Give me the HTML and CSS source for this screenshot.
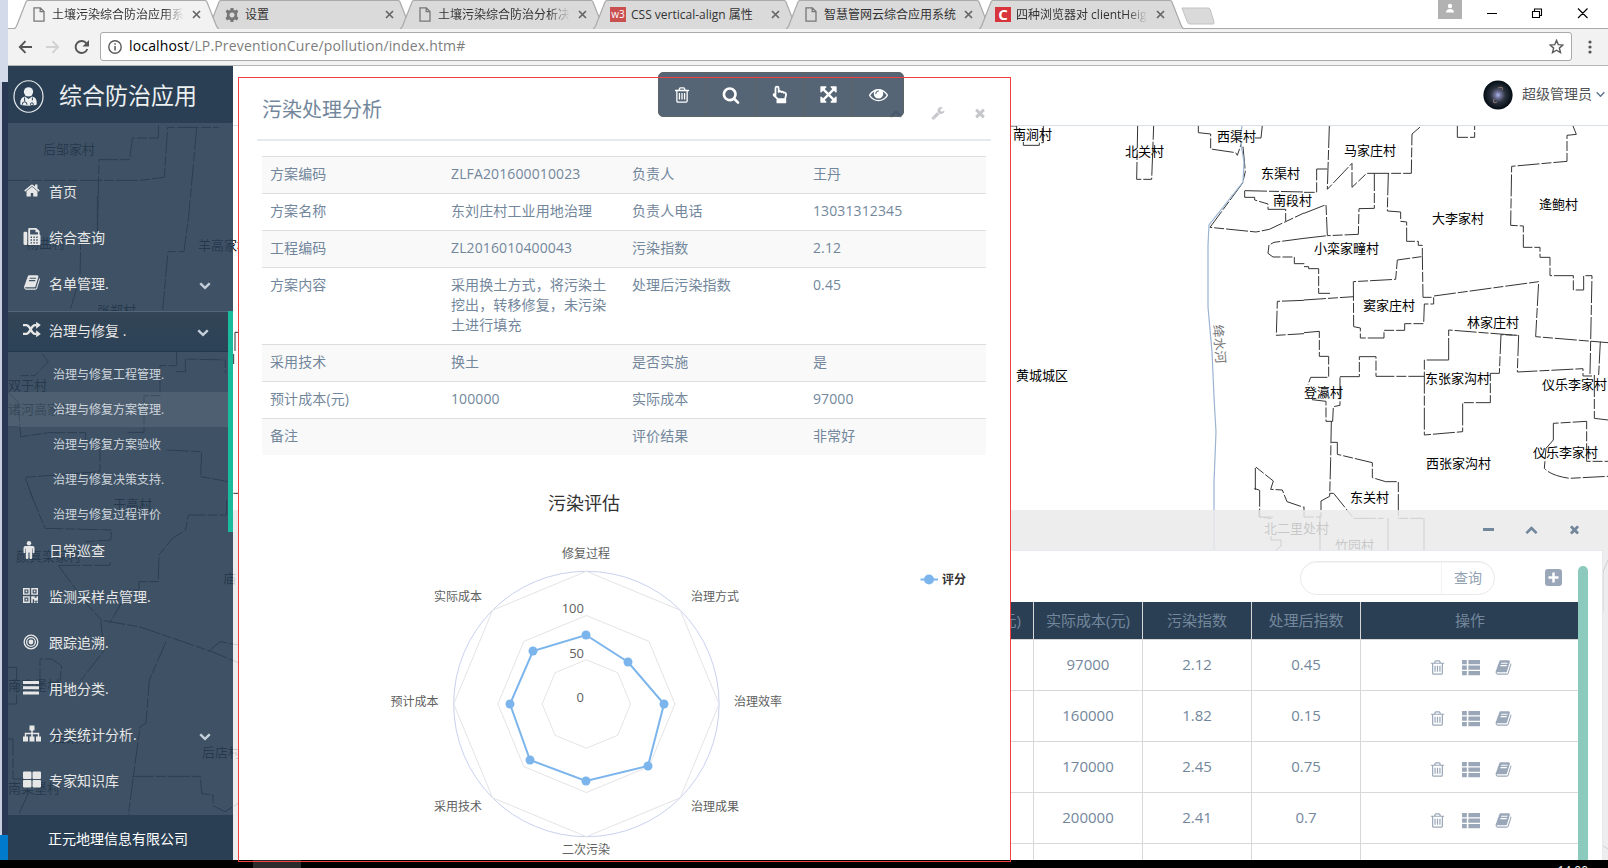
FILE: index.html
```html
<!DOCTYPE html>
<html lang="zh-CN">
<head>
<meta charset="utf-8">
<title>土壤污染综合防治应用系统</title>
<link rel="stylesheet" href="styles.css">
</head>
<body>
<svg class="defs" aria-hidden="true">
  <symbol id="home" viewBox="0 0 1792 1792"><path d="M1472 992v480q0 26-19 45t-45 19h-384v-384h-256v384h-384q-26 0-45-19t-19-45v-480q0-1 .5-3t.5-3l575-474 575 474q1 2 1 6zm223-69l-62 74q-8 9-21 11h-3q-13 0-21-7l-692-577-692 577q-12 8-24 7-13-2-21-11l-62-74q-8-10-7-23.5t11-21.5l719-599q32-26 76-26t76 26l244 204v-195q0-14 9-23t23-9h192q14 0 23 9t9 23v408l219 182q10 8 11 21.5t-7 23.5z"/></symbol>
  <symbol id="search" viewBox="0 0 1792 1792"><path d="M1216 832q0-185-131.500-316.500t-316.500-131.500-316.500 131.500-131.500 316.500 131.500 316.500 316.500 131.500 316.500-131.500 131.500-316.500zm512 832q0 52-38 90t-90 38q-54 0-90-38l-343-342q-179 124-399 124-143 0-273.500-55.500t-225-150-150-225-55.500-273.500 55.500-273.500 150-225 225-150 273.500-55.500 273.500 55.500 225 150 150 225 55.500 273.500q0 220-124 399l343 343q37 37 37 90z"/></symbol>
  <symbol id="trash" viewBox="0 0 1792 1792"><path d="M704 736v576q0 14-9 23t-23 9h-64q-14 0-23-9t-9-23v-576q0-14 9-23t23-9h64q14 0 23 9t9 23zm256 0v576q0 14-9 23t-23 9h-64q-14 0-23-9t-9-23v-576q0-14 9-23t23-9h64q14 0 23 9t9 23zm256 0v576q0 14-9 23t-23 9h-64q-14 0-23-9t-9-23v-576q0-14 9-23t23-9h64q14 0 23 9t9 23zm128 724v-948h-896v948q0 22 7 40.500t14.500 27 10.500 8.500h832q3 0 10.500-8.500t14.500-27 7-40.500zm-672-1076h448l-48-117q-7-9-17-11h-317q-10 2-17 11zm928 32v64q0 14-9 23t-23 9h-96v948q0 83-47 143.500t-113 60.500h-832q-66 0-113-58.500t-47-141.500v-952h-96q-14 0-23-9t-9-23v-64q0-14 9-23t23-9h309l70-167q15-37 54-63t79-26h320q40 0 79 26t54 63l70 167h309q14 0 23 9t9 23z"/></symbol>
  <symbol id="times" viewBox="0 0 1792 1792"><path d="M1490 1322q0 40-28 68l-136 136q-28 28-68 28t-68-28l-294-294-294 294q-28 28-68 28t-68-28l-136-136q-28-28-28-68t28-68l294-294-294-294q-28-28-28-68t28-68l136-136q28-28 68-28t68 28l294 294 294-294q28-28 68-28t68 28l136 136q28 28 28 68t-28 68l-294 294 294 294q28 28 28 68z"/></symbol>
  <symbol id="down" viewBox="0 0 1792 1792"><path d="M1683 808l-742 741q-19 19-45 19t-45-19l-742-741q-19-19-19-45.500t19-45.500l166-165q19-19 45-19t45 19l531 531 531-531q19-19 45-19t45 19l166 165q19 19 19 45.500t-19 45.500z"/></symbol>
  <symbol id="up" viewBox="0 0 1792 1792"><path d="M1683 1331l-166 165q-19 19-45 19t-45-19l-531-531-531 531q-19 19-45 19t-45-19l-166-165q-19-19-19-45.500t19-45.500l742-741q19-19 45-19t45 19l742 741q19 19 19 45.500t-19 45.500z"/></symbol>
  <symbol id="book" viewBox="0 0 1792 1792"><path d="M1703 478q40 57 18 129l-275 906q-19 64-76.500 107.500t-122.500 43.500h-923q-77 0-148.500-53.500t-99.500-131.500q-24-67-2-127 0-4 3-27t4-37q1-8-3-21.500t-3-19.500q2-11 8-21t16.500-23.500 16.500-23.500q23-38 45-91.500t30-91.500q3-10 .5-30t-.5-28q3-11 17-28t17-23q21-36 42-92t25-90q1-9-2.500-32t.5-28q4-13 22-30.500t22-22.500q19-26 42.500-84.500t27.500-96.500q1-8-3-25.500t-2-26.500q2-8 9-18t18-23 17-21q8-12 16.500-30.500t15-35 16-36 19.500-32 26.500-23.500 36-11.500 47.500 5.500l-1 3q38-9 51-9h761q74 0 114 56t18 130l-274 906q-36 119-71.500 153.500t-128.500 34.500h-869q-27 0-38 15-11 16-1 43 24 70 144 70h923q29 0 56-15.500t35-41.500l300-987q7-22 5-57 38 15 59 43zm-1064 2q-4 13 2 22.500t20 9.500h608q13 0 25.500-9.500t16.500-22.500l21-64q4-13-2-22.500t-20-9.500h-608q-13 0-25.500 9.500t-16.500 22.500zm-83 256q-4 13 2 22.500t20 9.500h608q13 0 25.500-9.500t16.500-22.500l21-64q4-13-2-22.500t-20-9.500h-608q-13 0-25.500 9.500t-16.500 22.500z"/></symbol>
  <symbol id="wrench" viewBox="0 0 1792 1792"><path d="M448 1472q0-26-19-45t-45-19-45 19-19 45 19 45 45 19 45-19 19-45zm644-420l-682 682q-37 37-90 37-52 0-91-37l-106-108q-38-36-38-90 0-53 38-91l681-681q39 98 114.500 173.500t173.500 114.500zm634-435q0 39-23 106-47 134-164.500 217.500t-258.500 83.500q-185 0-316.500-131.500t-131.500-316.500 131.500-316.500 316.500-131.500q58 0 121.500 16.500t107.500 46.500q16 11 16 28t-16 28l-293 169v224l193 107q5-3 79-48.500t135.500-81 70.500-35.500q15 0 23.500 10t8.500 25z"/></symbol>
  <symbol id="eye" viewBox="0 0 1792 1792"><path d="M1664 960q-152-236-381-353 61 104 61 225 0 185-131.500 316.500t-316.500 131.500-316.500-131.500-131.500-316.500q0-121 61-225-229 117-381 353 133 205 333.500 326.500t434.500 121.500 434.500-121.500 333.500-326.500zm-720-384q0-20-14-34t-34-14q-125 0-214.500 89.500t-89.500 214.500q0 20 14 34t34 14 34-14 14-34q0-86 61-147t147-61q20 0 34-14t14-34zm848 384q0 34-20 69-140 230-376.500 368.500t-499.500 138.500-499.500-139-376.500-368q-20-35-20-69t20-69q140-229 376.500-368t499.500-139 499.500 139 376.500 368q20 35 20 69z"/></symbol>
  <symbol id="arrows" viewBox="0 0 1792 1792"><path d="M1411 541l-355 355 355 355 144-144q29-31 70-14 39 17 39 59v448q0 26-19 45t-45 19h-448q-42 0-59-40-17-39 14-69l144-144-355-355-355 355 144 144q31 30 14 69-17 40-59 40h-448q-26 0-45-19t-19-45v-448q0-42 40-59 39-17 69 14l144 144 355-355-355-355-144 144q-19 19-45 19-12 0-24-5-40-17-40-59v-448q0-26 19-45t45-19h448q42 0 59 40 17 39-14 69l-144 144 355 355 355-355-144-144q-31-30-14-69 17-40 59-40h448q26 0 45 19t19 45v448q0 42-39 59-13 5-25 5-26 0-45-19z"/></symbol>
  <symbol id="hand" viewBox="0 0 18 18"><path d="M5.200 9.700V3a1.500 1.500 0 0 1 3 0v3.600c.3-1 2.400-.9 2.600.2.500-.7 2.200-.5 2.300.6.800-.5 2.100 0 2.100 1.300 0 2-.8 3-.8 4.800H7.300c-.8-1.700-2.100-2-3.500-3.500-.9-1-.1-2.300 1.400-.3zM7 14v2.500h7.500V14" fill="none" stroke="currentColor" stroke-width="1.700" stroke-linejoin="round"/><path d="M7 13.500h7.500v3H7z"/></symbol>
  <symbol id="list" viewBox="0 0 18 16"><path d="M1 1h4.500v4H1zM7 1h11v4H7zM1 6.200h4.500v4H1zM7 6.200h11v4H7zM1 11.400h4.500v4H1zM7 11.400h11v4H7z"/></symbol>
  <symbol id="fax" viewBox="0 0 18 18"><path fill-rule="evenodd" d="M0 5.500q0-1.500 1.200-1.500H3q1 0 1 1.200V17q0 1-1 1H1.200Q0 18 0 16.800zM5 1q0-1 1-1h7.500L17 3.300V7q1 .3 1 1.300V17q0 1-1 1H5zM7 1.800V7h8.300V4.500h-2.600V1.800zM7.500 9v1.500H9V9zm3 0v1.500H12V9zm3 0v1.500H15V9zm-6 3v1.500H9V12zm3 0v1.500H12V12zm3 0v1.500H15V12zm-6 3v1.500H9V15zm3 0v1.500H12V15zm3 0v1.500H15V15z"/></symbol>
  <symbol id="random" viewBox="0 0 18.500 16"><path d="M0 3.500h3.200c4.800 0 4.500 9 9.300 9H14M0 12.500h3.200c4.800 0 4.500-9 9.300-9H14" fill="none" stroke="currentColor" stroke-width="2.500"/><path d="M13.500 0L18.300 3.500l-4.800 3.700zM13.500 8.800l4.800 3.700-4.800 3.500z"/></symbol>
  <symbol id="male" viewBox="0 0 12 18"><circle cx="6" cy="2.200" r="2.200"/><path d="M2.500 5h7q2 0 2 2v4.200q0 1-.9 1t-.9-1V7.500H9.200V17q0 1-1.300 1t-1.300-1v-5.500H5.400V17q0 1-1.300 1t-1.300-1V7.500h-.5v3.700q0 1-.9 1t-.9-1V7q0-2 2-2z"/></symbol>
  <symbol id="qr" viewBox="0 0 15 15"><path fill-rule="evenodd" d="M0 0h6.800v6.800H0zM1.400 1.400v4h4v-4zM2.600 2.600h1.600v1.600H2.600zM8.200 0H15v6.800H8.200zm1.400 1.400v4h4v-4zm1.200 1.200h1.600v1.600h-1.600zM0 8.200h6.800V15H0zm1.400 1.400v4h4v-4zm1.200 1.200h1.600v1.600H2.600zM8.200 8.200h3.500v1.500h1.800V8.200H15v4.500h-4v-1.400H9.700V15H8.200zM11 13.500h1.400V15H11zm2.600 0H15V15h-1.400z"/></symbol>
  <symbol id="target" viewBox="0 0 18 18"><g fill="none" stroke="currentColor" stroke-width="1.500"><circle cx="9" cy="9" r="7.700"/><circle cx="9" cy="9" r="4.900"/></g><circle cx="9" cy="9" r="2.700"/></symbol>
  <symbol id="bars" viewBox="0 0 16 14"><path d="M0 0h16v3H0zM0 5.200h16v3H0zM0 10.400h16v3H0z"/></symbol>
  <symbol id="sitemap" viewBox="0 0 18 16"><path d="M6.500 0h5v5H9.800v2.300h6.400V11H18v5h-5v-5h1.800V8.700h-5V11h1.700v5h-5v-5h1.700V8.700H3.200V11H5v5H0v-5h1.800V7.300h6.400V5H6.500z"/></symbol>
  <symbol id="large" viewBox="0 0 17 15"><path d="M1 0h6q1 0 1 1v5q0 1-1 1H1Q0 7 0 6V1q0-1 1-1zm9 0h6q1 0 1 1v5q0 1-1 1h-6Q9 7 9 6V1q0-1 1-1zM1 8h6q1 0 1 1v5q0 1-1 1H1q-1 0-1-1V9q0-1 1-1zm9 0h6q1 0 1 1v5q0 1-1 1h-6q-1 0-1-1V9q0-1 1-1z"/></symbol>
  <symbol id="page" viewBox="0 0 12 15"><path d="M1 .8h6.300L11 4.500v9.700H1zM7.200.8v3.800H11" fill="none" stroke="currentColor" stroke-width="1.300"/></symbol>
  <symbol id="gear" viewBox="0 0 14 14"><path fill-rule="evenodd" d="M5.600 0h2.800l.4 1.900 1.300.6L11.800 1.400l1.500 2.200-1.200 1.600v3.200l1.300 1.700-1.500 2.400-1.900-1-1.300.6-.4 1.900H5.600l-.4-1.900-1.300-.6-1.900 1L.5 10.100l1.400-1.700V5.200L.6 3.600l1.500-2.200 1.800 1.100 1.300-.6zM7 4.400a2.600 2.600 0 1 0 .01 0z"/></symbol>
  <symbol id="tabshape" viewBox="0 0 205 29" preserveAspectRatio="none"><path d="M0 29Q2 28 3 25L12 2q.8-1.500 2.500-1.500h176q1.700 0 2.500 1.500l9 23q1 3 3 4" stroke="#aaa" stroke-width="1.200"/></symbol>
  <symbol id="x" viewBox="0 0 9 9"><path d="M1 1l7 7M8 1L1 8" fill="none" stroke="currentColor" stroke-width="1.700"/></symbol>
</svg>

<div class="screen">
  <div class="edge"><i class="edge-top"></i><i class="edge-mid"></i><i class="edge-end"></i></div>
  <div class="window">
    <div class="tabstrip">
      <div class="tab active"><svg class="shape"><use href="#tabshape"/></svg><svg class="fav page"><use href="#page"/></svg><span class="fade">土壤污染综合防治应用系</span><svg class="close"><use href="#x"/></svg></div>
      <div class="tab"><svg class="shape"><use href="#tabshape"/></svg><svg class="fav gear"><use href="#gear"/></svg><span>设置</span><svg class="close"><use href="#x"/></svg></div>
      <div class="tab"><svg class="shape"><use href="#tabshape"/></svg><svg class="fav page"><use href="#page"/></svg><span class="fade">土壤污染综合防治分析决</span><svg class="close"><use href="#x"/></svg></div>
      <div class="tab"><svg class="shape"><use href="#tabshape"/></svg><b class="fav w3">w3</b><span>CSS vertical-align 属性</span><svg class="close"><use href="#x"/></svg></div>
      <div class="tab"><svg class="shape"><use href="#tabshape"/></svg><svg class="fav page"><use href="#page"/></svg><span>智慧管网云综合应用系统</span><svg class="close"><use href="#x"/></svg></div>
      <div class="tab"><svg class="shape"><use href="#tabshape"/></svg><b class="fav csdn">C</b><span class="fade">四种浏览器对 clientHeig</span><svg class="close"><use href="#x"/></svg></div>
      <svg class="newtab" viewBox="0 0 34 18"><path d="M1 1h26q1.500 0 2 1l4 13q.5 2-1 2H9q-2 0-2.500-1.500z" fill="#dadada" stroke="#c2c2c2"/></svg>
      <div class="winctl">
        <svg viewBox="0 0 172 29" width="172" height="29"><path d="M0 0h24v19H0z" fill="#b1b1b1"/><circle cx="12" cy="6" r="2.200" fill="#fff"/><path d="M8 12.500q0-3.500 4-3.500t4 3.500z" fill="#fff"/><g fill="none" stroke="#000" stroke-width="1.100"><path d="M49 13.500h10M94.500 11.500h7v6h-7zM96.500 11V9h7v6.500h-2M140 8.500l9.500 9.500m0-9.500l-9.500 9.500"/></g></svg>
      </div>
    </div>
    <div class="toolbar">
      <svg class="nav" viewBox="0 0 72 20"><g fill="none" stroke-width="1.900"><path d="M14 10H2m5.500-5.800L1.800 10l5.700 5.800" stroke="#555"/><path d="M28 10h12m-5.500-5.800L40.200 10l-5.700 5.800" stroke="#d2d2d2"/><path d="M68.500 6.500a6 6 0 1 0 .8 5.500" stroke="#555"/></g><path d="M71 3v6.500h-6.500z" fill="#555"/></svg>
      <div class="omnibox">
        <svg class="info" viewBox="0 0 14 14"><circle cx="7" cy="7" r="6.200" fill="none" stroke="#5a5a5a" stroke-width="1.400"/><path d="M6.300 6h1.500v4.500H6.300zM6.300 3.300h1.500v1.500H6.300z" fill="#5a5a5a"/></svg>
        <span class="url"><b>localhost</b>/LP.PreventionCure/pollution/index.htm#</span>
        <svg class="star" viewBox="0 0 14 14"><path d="M7 1.300l1.700 4 4.300.4-3.300 2.800 1 4.200L7 10.500l-3.700 2.200 1-4.200L1 5.700l4.300-.4z" fill="none" stroke="#5a5a5a" stroke-width="1.300"/></svg>
      </div>
      <svg class="dots" viewBox="0 0 4 14"><circle cx="2" cy="2" r="1.600"/><circle cx="2" cy="7" r="1.600"/><circle cx="2" cy="12" r="1.600"/></svg>
    </div>

    <div class="app">
      <svg class="map" viewBox="8 66 1600 794">
        <g class="lines">
          <g transform="translate(0 120) scale(.33333)">
            <path d="M475 16v38h-78l-8 65h-92l-5 240M24 181h395l74-9 10-150h155M590 24l-24 265-14 106h-48l-16 175M292 230v130h-50l-2 110-28 95h-8M125 700l20 25-40 42H62M24 815l30 30 8 105 85-12h110v20M530 695v42h-50v90h-48v110h-52M528 755h28v-38l120 3v40M500 990l105 5-3 75 83 15M300 960v95L75 1072l25 67M715 637h-10v60M701 702v30M24 920h30"/>
          </g>
          <g transform="translate(0 490) scale(.33333)">
            <path d="M90 5l45 110 200 5-3 30-75 5M175 226h155v-10M175 226l80 110 50 55 115 20 210 72 85 35M680 30v45H565l-8 45-40 25-40 50-2 80h-58v25h-30l-58 100M302 392l10 90-70 90M498 455l-50 115-10 130-18 10-20 150-15 115M395 859h206l4 52 34 4v32l36 18 40-25M625 485l35-30 55 10M24 532h26v110H24M120 600v-93h35l30 20-10 90M24 747h15v120h50M85 910l-30 65M700 10h15"/>
          </g>
          <g transform="translate(1000 120) scale(.33333)">
            <path d="M30 18h20v14M70 66v10h48v-8h12V18M413 18l-3 160h45l6-160M595 16v22l37 4v45l75 11 5 8 12-35M787 16l-4 38h-18M729 80l7 75-8 34-98 133 138 14 40-8 104-49M735 212l177 4M734 212v20h30v8l40 12v16h53v35M912 355l-90 12-15 8-3 25 15 11h64v20h30M912 541l-80 3-3 102 83-5M766 1110v-70l54 43-8 25 35 2 14 35 50 17M763 1105l16 6v80l35 5"/>
          </g>
          <g transform="translate(1304 120) scale(.33333)">
            <path d="M76 18l-6 190 74-78v72l44-42h134l2-118 28-24M460 18v34h52V18M70 147H38v70H0M0 280l66-26 4 93 93-4 2-77 46-1V160M0 355l70-8M253 160l-3 113 40 3v28l18 2v58h35v12h12v30l2 126h32v20h-28l-2 59h-57v20h-62v23h-71v-30l-20-4-1-135 127-7 5-58 72-10M0 440h14v6h30v74h34M0 540l150-10M390 528l314-43-9 165 217 18M807 18l10 25-28 3v78l-166 15-3 177 38 2v64h50v30h30v55h70v43h31v-43h25l-6 295M434 720h-73v225l115-10v-87h83v-88h27l5-116 53 2-4 110 197-10v22h27M434 720v-90l205 16M0 638l46-4v75h28v63H20l-8 22M108 772v84l-20 4-2 44H66v-60l-42-5M108 770h58v-60h50v59h145M82 904l-2 115-3 110-26 14v48H0M82 967h18v36l105 25v45l40 12h38v110h75M77 1120h12l60 75h90M0 1160v31M871 765v130l41 5M889 665l-5 100M748 960v-50l100-6v120h64M748 960l-22 25-5 60q20 22 75 30l116-6"/>
          </g>
          <path d="M1259 510v7h14M1271 536v4h10v6l-5 4M1320 515v35M1388 518v32M1424 518v32M1608 560l-5 12v40M1602 845l6 4"/>
        </g>
        <path class="river" d="M1242 126l-2 12 4 24-1 20-34 43-1 20v62l4 45 2 45 2 35-2 50v90"/>
        <g class="labels">
          <text x="43" y="154">后邹家村</text><text x="26" y="248">杨曲村</text><text x="198" y="250">羊高家村</text><text x="97" y="315">张郑村</text><text x="8" y="390">双于村</text><text x="8" y="414">诸河高家村</text><text x="113" y="509">于高村</text><text x="16" y="561">颜真栾家村</text><text x="223" y="583">庙</text><text x="8" y="690">南栾堡村</text><text x="53" y="742">后栾村</text><text x="202" y="757">后店村</text><text x="8" y="793">南栾堡村</text>
          <text x="1013" y="139">南涧村</text><text x="1125" y="156">北关村</text><text x="1217" y="141">西渠村</text><text x="1261" y="178">东渠村</text><text x="1273" y="205">南段村</text><text x="1344" y="155">马家庄村</text><text x="1432" y="223">大李家村</text><text x="1539" y="209">逄鲍村</text><text x="1314" y="253">小栾家疃村</text><text x="1363" y="310">窦家庄村</text><text x="1467" y="327">林家庄村</text><text x="1016" y="380">黄城城区</text><text x="1304" y="397">登瀛村</text><text x="1425" y="383">东张家沟村</text><text x="1542" y="389">仪乐李家村</text><text x="1533" y="457">仪乐李家村</text><text x="1426" y="468">西张家沟村</text><text x="1350" y="502">东关村</text><text x="1264" y="533">北二里处村</text><text x="1335" y="550">竹园村</text>
          <text class="rivername" transform="translate(1213 325) rotate(85)">绛水河</text>
        </g>
      </svg>

      <aside class="sidebar">
        <div class="brand">
          <svg class="logo" viewBox="0 0 32 34"><ellipse cx="16" cy="17" rx="15" ry="16.300" fill="none" stroke="#ecf0f1" stroke-width="1.200"/><circle cx="16" cy="12.200" r="4.800" fill="#ecf0f1"/><path d="M7.500 25q-.5-7.500 5-8l3.500 2.500 3.500-2.500q5.500.5 5 8-1 1.500-8.500 1.500T7.500 25z" fill="#ecf0f1"/><path d="M12 18v4m8-4v3m-10.500 4.500q0-3 2.500-3t2.500 3m3.500-.5a1.500 1.500 0 1 0 3 0a1.500 1.500 0 1 0-3 0" fill="none" stroke="#2a3f54" stroke-width="1"/></svg>
          <span>综合防治应用</span>
        </div>
        <nav class="menu">
          <a><svg class="mi"><use href="#home"/></svg>首页</a>
          <a><svg class="mi"><use href="#fax"/></svg>综合查询</a>
          <a><svg class="mi"><use href="#book"/></svg>名单管理.<svg class="chev"><use href="#down"/></svg></a>
          <div class="group">
            <a class="on"><svg class="mi"><use href="#random"/></svg>治理与修复 .<svg class="chev"><use href="#down"/></svg></a>
            <ul>
              <li>治理与修复工程管理.</li><li class="hover">治理与修复方案管理.</li><li>治理与修复方案验收</li><li>治理与修复决策支持.</li><li>治理与修复过程评价</li>
            </ul>
          </div>
          <a><svg class="mi male"><use href="#male"/></svg>日常巡查</a>
          <a><svg class="mi sm"><use href="#qr"/></svg>监测采样点管理.</a>
          <a><svg class="mi md"><use href="#target"/></svg>跟踪追溯.</a>
          <a><svg class="mi md"><use href="#bars"/></svg>用地分类.</a>
          <a><svg class="mi"><use href="#sitemap"/></svg>分类统计分析.<svg class="chev"><use href="#down"/></svg></a>
          <a><svg class="mi"><use href="#large"/></svg>专家知识库</a>
        </nav>
        <div class="company">正元地理信息有限公司</div>
      </aside>

      <header class="topnav">
        <svg class="avatar" viewBox="0 0 30 30"><defs><radialGradient id="gx"><stop offset="0" stop-color="#a9b6ee"/><stop offset=".22" stop-color="#6d6f92"/><stop offset=".5" stop-color="#2b333f"/><stop offset="1" stop-color="#020a12"/></radialGradient></defs><circle cx="15" cy="15" r="14.600" fill="url(#gx)"/><path d="M15 8q6-2 4 2m-5 12q-5 2-3-3" fill="none" stroke="#a98b80" stroke-width="1.200" opacity=".7"/></svg>
        <span>超级管理员</span>
        <svg class="caret" viewBox="0 0 8 6"><path d="M.6 1L4 4.600 7.400 1" fill="none" stroke="#5a738e" stroke-width="1.200"/></svg>
      </header>

      <section class="bottom">
        <div class="bottom-head">
          <i class="minus"></i><svg><use href="#up"/></svg><svg><use href="#times"/></svg>
        </div>
        <div class="bottom-body">
          <div class="searchrow">
            <div class="searchbox"><i></i><button>查询</button></div>
            <svg class="plus" viewBox="0 0 17 17"><rect width="17" height="17" rx="3" fill="#9aa7b8"/><path d="M8.500 3.500v10m-5-5h10" stroke="#fff" stroke-width="2.500"/></svg>
          </div>
          <div class="scrollarea">
            <div class="grid">
              <div class="gr gh"><span>预计成本(元)</span><span>实际成本(元)</span><span>污染指数</span><span>处理后指数</span><span>操作</span></div>
              <div class="gr"><span></span><span>97000</span><span>2.12</span><span>0.45</span><span class="ops"><svg><use href="#trash"/></svg><svg class="ls"><use href="#list"/></svg><svg><use href="#book"/></svg></span></div>
              <div class="gr"><span></span><span>160000</span><span>1.82</span><span>0.15</span><span class="ops"><svg><use href="#trash"/></svg><svg class="ls"><use href="#list"/></svg><svg><use href="#book"/></svg></span></div>
              <div class="gr"><span></span><span>170000</span><span>2.45</span><span>0.75</span><span class="ops"><svg><use href="#trash"/></svg><svg class="ls"><use href="#list"/></svg><svg><use href="#book"/></svg></span></div>
              <div class="gr"><span></span><span>200000</span><span>2.41</span><span>0.7</span><span class="ops"><svg><use href="#trash"/></svg><svg class="ls"><use href="#list"/></svg><svg><use href="#book"/></svg></span></div>
              <div class="gr"><span></span><span></span><span></span><span></span><span></span></div>
            </div>
          </div>
          <i class="scrollbar"></i>
        </div>
      </section>

      <section class="modal">
        <div class="modal-head">
          <h2>污染处理分析</h2>
          <div class="tools"><svg><use href="#up"/></svg><svg><use href="#wrench"/></svg><svg><use href="#times"/></svg></div>
        </div>
        <div class="info-table">
          <span>方案编码</span><span>ZLFA201600010023</span><span>负责人</span><span>王丹</span>
          <span>方案名称</span><span>东刘庄村工业用地治理</span><span>负责人电话</span><span>13031312345</span>
          <span>工程编码</span><span>ZL2016010400043</span><span>污染指数</span><span>2.12</span>
          <span>方案内容</span><span>采用换土方式，将污染土<br>挖出，转移修复，未污染<br>土进行填充</span><span>处理后污染指数</span><span>0.45</span>
          <span>采用技术</span><span>换土</span><span>是否实施</span><span>是</span>
          <span>预计成本(元)</span><span>100000</span><span>实际成本</span><span>97000</span>
          <span>备注</span><span></span><span>评价结果</span><span>非常好</span>
        </div>
        <svg class="chart" viewBox="262 476 724 384">
          <text class="ct" x="584" y="510.500">污染评估</text>
          <circle cx="586.400" cy="705" r="132.700" fill="none" stroke="#c8d2ee"/>
          <g fill="none" stroke="#e4e4e8">
            <path d="M586.400 572.300l93.800 38.900 38.900 93.800-38.900 93.800-93.800 38.900-93.800-38.900-38.900-93.800 38.900-93.800z"/>
            <path d="M586.400 616.500l62.600 25.900 25.900 62.600-25.900 62.600-62.600 25.900-62.600-25.900-25.900-62.600 25.900-62.600z"/>
            <path d="M586.400 660.800l31.300 12.900 12.900 31.300-12.900 31.300-31.300 12.900-31.300-12.900-12.900-31.300 12.900-31.300z"/>
          </g>
          <path d="M586 636l42 27 36 42-16 62-62 15-56-21-20-56 23-53z" fill="none" stroke="#7cb5ec" stroke-width="2"/>
          <g fill="#7cb5ec"><circle cx="586" cy="636" r="4.500"/><circle cx="628" cy="663" r="4.500"/><circle cx="664" cy="705" r="4.500"/><circle cx="648" cy="767" r="4.500"/><circle cx="586" cy="782" r="4.500"/><circle cx="530" cy="761" r="4.500"/><circle cx="510" cy="705" r="4.500"/><circle cx="533" cy="652" r="4.500"/><circle cx="929" cy="580.500" r="5"/></g>
          <path d="M920.500 580.500h17.500" stroke="#7cb5ec" stroke-width="2"/>
          <g class="cl">
            <text x="586" y="559" text-anchor="middle">修复过程</text><text x="691" y="602">治理方式</text><text x="734" y="707">治理效率</text><text x="691" y="812">治理成果</text><text x="586" y="855" text-anchor="middle">二次污染</text><text x="482" y="812" text-anchor="end">采用技术</text><text x="438.500" y="707" text-anchor="end">预计成本</text><text x="482" y="602" text-anchor="end">实际成本</text>
            <text x="584" y="614" text-anchor="end" class="n">100</text><text x="584" y="659" text-anchor="end" class="n">50</text><text x="584" y="703" text-anchor="end" class="n">0</text>
            <text x="942" y="585" class="lg">评分</text>
          </g>
        </svg>
      </section>

      <div class="maptools">
        <span><svg><use href="#trash"/></svg></span><span><svg><use href="#search"/></svg></span><span><svg class="big"><use href="#hand"/></svg></span><span><svg class="big"><use href="#arrows"/></svg></span><span><svg class="big"><use href="#eye"/></svg></span>
      </div>
      <i class="redline"></i>
    </div>
  </div>
  <footer class="taskbar"><i></i><span>14:00</span></footer>
</div>
</body>
</html>
```
FILE: styles.css
```css
* { box-sizing: border-box; }
body { margin: 0; width: 1608px; height: 868px; overflow: hidden; font-family: "Open Sans", "Noto Sans CJK SC", sans-serif; font-size: 14px; color: #73879c; background: #fff; }
svg { fill: currentColor; flex: none; display: block; }
i, b { font-style: normal; font-weight: normal; }
.defs { position: absolute; width: 0; height: 0; }
.screen { display: grid; grid-template: 860px 8px / 8px 1600px; height: 868px; overflow: hidden; }
.edge { display: flex; flex-direction: column; border-left: 2px solid #c9cfe0; }
.edge-top { height: 82px; background: #d3dae9; margin-left: -2px; }
.edge-mid { flex: 1; background: #293955; }
.edge-end { height: 25px; background: #007acc; margin-left: -2px; }
.taskbar { grid-column: 1 / 3; background: #000; overflow: hidden; display: flex; justify-content: space-between; padding: 0 20px 0 253px; }
.taskbar i { width: 48px; background: #2b2b2b; }
.taskbar span { color: #fff; font-size: 12px; line-height: 21px; }

/* browser chrome */
.window { display: flex; flex-direction: column; }
.tabstrip { height: 29px; display: flex; padding-left: 6px; border-bottom: 1px solid #aaa; background: #fff; }
.tab { position: relative; width: 205px; height: 29px; margin-right: -12px; display: flex; align-items: center; padding-left: 18px; color: #333; font-size: 12px; z-index: 1; flex: none; }
.tab.active { z-index: 2; }
.shape { position: absolute; inset: 0; width: 205px; height: 29px; fill: #dadada; z-index: -1; }
.active .shape { fill: #f2f2f2; }
.fav { width: 16px; height: 15px; margin-right: 4px; color: #777; }
.fav.page { width: 12px; margin: 0 7px 0 1px; }
.fav.gear { width: 14px; height: 14px; margin-right: 6px; }
.w3, .csdn { margin-left: -1px; margin-right: 5px; background: #c9504f; color: #fff; font-size: 10px; line-height: 14px; text-align: center; }
.csdn { margin-left: -2px; background: #d8343c; font-size: 15px; font-weight: 700; }
.tab span { width: 132px; white-space: nowrap; overflow: hidden; line-height: 20px; }
.fade { -webkit-mask-image: linear-gradient(90deg, #000 84%, transparent); mask-image: linear-gradient(90deg, #000 84%, transparent); }
.close { width: 9px; height: 9px; margin-left: 8px; color: #666; }
.newtab { width: 34px; height: 18px; margin: 7px 0 0 9px; }
.winctl { margin-left: auto; margin-right: -2px; width: 172px; }
.toolbar { height: 37px; background: #f2f2f2; border-bottom: 1px solid #b6b6b6; display: flex; align-items: center; padding: 0 16px 1px 10px; flex: none; }
.nav { width: 72px; height: 20px; }
.omnibox { width: 1472px; height: 29px; margin-left: 10px; border: 1px solid #aaa; border-radius: 3px; background: #fff; display: flex; align-items: center; padding: 0 7px; }
.info { width: 14px; height: 14px; margin-right: 7px; }
.url { flex: 1; color: #7d7d7d; font-size: 14px; letter-spacing: .16px; line-height: 20px; padding-bottom: 1px; }
.url b { color: #000; }
.star { width: 15px; height: 15px; }
.dots { width: 4px; height: 14px; margin-left: auto; color: #555; }

/* application */
.app { position: relative; height: 794px; width: 1600px; display: flex; align-items: flex-start; background: #fff; }
.map { position: absolute; inset: 0; width: 1600px; height: 794px; }
.lines { fill: none; stroke: #333; stroke-width: 1; }
.lines g path { stroke-width: 3; stroke-dasharray: 66 6 30 6; }
.river { fill: none; stroke: #9ab4d2; stroke-width: 1.2; }
.labels { fill: #000; font: 13px "Noto Sans CJK SC", sans-serif; }
.rivername { fill: #777; }

.sidebar { position: relative; width: 225px; height: 794px; background: rgba(42, 63, 84, .9); color: #e7e7e7; display: flex; flex-direction: column; }
.brand { height: 57px; background: #2a3f54; display: flex; align-items: center; padding: 1px 0 0 5px; font-size: 23px; line-height: 32px; color: #ecf0f1; border-radius: 0 0 3px 0; }
.logo { width: 31px; height: 35px; margin-right: 15px; margin-top: 2px; }
.menu { flex: 1; padding-top: 46px; }
.menu a { height: 46px; display: flex; align-items: center; padding-left: 15px; line-height: 20px; }
.mi { width: 18px; height: 17px; margin: -3px 8px 0 0; }
.mi.male { width: 12px; height: 18px; margin-right: 14px; }
.mi.sm { width: 15px; height: 15px; margin-right: 11px; }
.mi.md { width: 16px; height: 16px; margin-right: 10px; }
.chev { width: 12px; height: 12px; margin: 2px 22px 0 auto; color: #c4cfda; }
.group { border-right: 5px solid #1abb9c; height: 221px; margin-top: 4px; }
.menu a.on { height: 41px; padding-bottom: 2px; background: linear-gradient(#334556, #2c4257), #2a3f54; border-top: 1px solid #52667a; border-bottom: 1px solid #24384b; }
.on .chev { margin-right: 19px; }
.group ul { list-style: none; margin: 0; padding: 5px 0 0; }
.group li { height: 35px; line-height: 35px; padding-left: 45px; font-size: 12px; color: #cfd6dd; }
.group li.hover { background: rgba(255, 255, 255, .08); }
.group + a { margin-top: -4px; }
.company { height: 45px; padding: 4px 0 0 40px; line-height: 40px; background: #2a3f54; color: #fff; }

.topnav { flex: 1; position: relative; height: 60px; background: #fff; border-bottom: 1px solid #d9dee4; display: flex; align-items: center; justify-content: flex-end; padding: 0 3px 2px 0; color: #515356; line-height: 20px; }
.topnav span { padding-bottom: 2px; }
.avatar { width: 30px; height: 30px; margin-right: 9px; }
.caret { width: 9px; height: 7px; margin-left: 4px; }

.bottom { position: absolute; left: 225px; right: 0; top: 444px; bottom: 0; background: rgba(234, 234, 234, .85); padding: 0 5px 0 6px; display: flex; flex-direction: column; }
.bottom-head { height: 40px; display: flex; align-items: center; justify-content: flex-end; gap: 31px; padding: 0 22px 1px 0; color: #73879c; }
.bottom-head svg { width: 13px; height: 13px; }
.bottom-head svg:first-of-type { margin-right: -1px; }
.minus { width: 11px; height: 3px; background: #73879c; }
.bottom-body { position: relative; flex: 1; background: #fff; border: 1px solid #e6e9ed; border-bottom: 0; }
.searchrow { height: 51px; display: flex; justify-content: flex-end; align-items: center; padding: 2px 40px 0 0; }
.searchbox { width: 195px; height: 34px; border: 1px solid #e9e9e9; border-radius: 17px; display: flex; margin-right: 50px; box-shadow: inset 0 1px 0 rgba(0, 0, 0, .04); }
.searchbox i { flex: 1; border-right: 1px solid #f3f3f3; }
.searchbox button { width: 52px; border: 0; padding: 0 0 1px; background: none; font: inherit; color: #93a2b2; }
.plus { width: 17px; height: 17px; }
.scrollarea { display: flex; justify-content: flex-end; margin-right: 23px; height: 258px; overflow: hidden; }
.gr { display: grid; grid-template-columns: repeat(4, 109px) 218px; height: 51px; font-size: 15px; }
.gr span { border-right: 1px solid #d8d8d8; border-bottom: 1px solid #d8d8d8; display: flex; justify-content: center; align-items: center; line-height: 20px; padding-bottom: 2px; }
.gr span:last-child { border-right: 0; }
.gh { height: 38px; background: #2a3f54; color: #73879c; }
.gr .ops { gap: 16px; padding: 4px 0 0 0; color: #9aa7b8; }
.ops svg { width: 17px; height: 17px; }
.ops .ls { width: 19px; height: 17px; margin: 0 -1px; }
.scrollbar { position: absolute; right: 14px; top: 15px; bottom: 0; width: 10px; border-radius: 5px 5px 0 0; background: #8bcabc; }

.modal { position: absolute; left: 230px; top: 11px; width: 772px; height: 783px; background: #fff; padding: 4px 24px 0 19px; }
.modal-head { display: flex; justify-content: space-between; width: 734px; height: 60px; border-bottom: 2px solid #e6e9ed; }
.modal h2 { margin: 0; padding: 13px 0 0 5px; font-size: 20px; font-weight: 400; line-height: 32px; }
.tools { display: flex; gap: 28px; padding: 25px 4px 0 0; color: #c5c7cb; }
.tools svg { width: 14px; height: 14px; }
.info-table { display: grid; grid-template-columns: repeat(4, 181px); margin: 15px 0 0 5px; line-height: 20px; font-size: 14px; letter-spacing: .12px; }
.info-table span { padding: 7px 8px 9px; border-top: 1px solid #ddd; min-height: 37px; white-space: nowrap; }
.info-table span:nth-child(8n+1), .info-table span:nth-child(8n+2), .info-table span:nth-child(8n+3), .info-table span:nth-child(8n+4) { background: #f9f9f9; }
.chart { width: 724px; height: 384px; margin: 20px 0 0 5px; }
.ct { font-size: 18px; text-anchor: middle; fill: #333; }
.cl { font-size: 12px; fill: #606060; }
.n { font-size: 13px; }
.lg { font-weight: 700; fill: #333; }

.maptools { position: absolute; left: 650px; top: 6px; width: 246px; height: 45px; background: rgba(42, 63, 84, .8); border: 1px solid #5d6468; border-radius: 5px; display: grid; grid-template-columns: 47px 50px 48px 49px 50px; color: #fff; }
.maptools span { display: flex; align-items: center; justify-content: center; border-right: 1px solid #5d6468; }
.maptools span:last-child { border: 0; }
.maptools svg { width: 18px; height: 18px; }
.maptools .big { width: 19px; height: 19px; }
.redline { position: absolute; left: 230px; top: 11px; width: 773px; height: 785px; border: 1px solid #f04040; pointer-events: none; }
```
